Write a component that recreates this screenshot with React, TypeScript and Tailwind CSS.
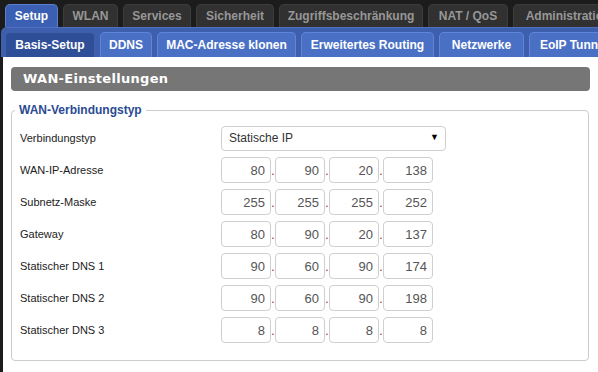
const TOP_TABS = [
  { label: "Setup", w: "w-[53px]", active: true },
  { label: "WLAN", w: "w-[55px]" },
  { label: "Services", w: "w-[68px]" },
  { label: "Sicherheit", w: "w-[78px]" },
  { label: "Zugriffsbeschränkung", w: "w-[144px]" },
  { label: "NAT / QoS", w: "w-[80px]" },
  { label: "Administration", w: "w-[110px]" },
];

const SUB_TABS = [
  { label: "Basis-Setup", w: "w-[90px]", active: true },
  { label: "DDNS", w: "w-[52px]" },
  { label: "MAC-Adresse klonen", w: "w-[139px]" },
  { label: "Erweitertes Routing", w: "w-[133px]" },
  { label: "Netzwerke", w: "w-[85px]" },
  { label: "EoIP Tunnel", w: "w-[90px]" },
];

const ROWS: { label: string; ip: string[] }[] = [
  { label: "WAN-IP-Adresse", ip: ["80", "90", "20", "138"] },
  { label: "Subnetz-Maske", ip: ["255", "255", "255", "252"] },
  { label: "Gateway", ip: ["80", "90", "20", "137"] },
  { label: "Statischer DNS 1", ip: ["90", "60", "90", "174"] },
  { label: "Statischer DNS 2", ip: ["90", "60", "90", "198"] },
  { label: "Statischer DNS 3", ip: ["8", "8", "8", "8"] },
];

function IpField({ parts }: { parts: string[] }) {
  return (
    <div className="flex items-baseline">
      {parts.map((p, i) => (
        <div key={i} className="flex items-baseline">
          {i > 0 && (
            <span className="w-[4px] text-center text-[12px] leading-none text-[#8b1a1a]">
              .
            </span>
          )}
          <input
            readOnly
            value={p}
            className="h-[26px] w-[50px] rounded-[4px] border border-[#cfcfcf] bg-white pr-[5px] text-right text-[13px] text-[#555] outline-none"
          />
        </div>
      ))}
    </div>
  );
}

export default function App() {
  return (
    <div className="flex h-[372px] w-[598px] flex-col overflow-hidden bg-[#1c1c1c] font-['Liberation_Sans',Arial,sans-serif]">
      <div className="flex h-[27px] shrink-0 items-end gap-[5px] pl-[5px]">
        {TOP_TABS.map((t) => (
          <div
            key={t.label}
            className={
              "flex h-[23px] shrink-0 items-center justify-center rounded-t-[5px] border border-b-0 text-[12px] font-bold " +
              t.w +
              (t.active
                ? " border-[#5a7fd0] bg-[#3b5fb2] text-white"
                : " border-[#3c3c3c] bg-[#313131] text-[#979797]")
            }
          >
            {t.label}
          </div>
        ))}
      </div>
      <div className="ml-[1px] flex h-[30px] shrink-0 items-end gap-[5px] rounded-tl-[6px] border-t border-[#4d70c2] bg-[#3d5fad] pl-[4px]">
        {SUB_TABS.map((t) => (
          <div
            key={t.label}
            className={
              "flex h-[25px] shrink-0 items-center justify-center rounded-t-[5px] border border-b-0 text-[12px] font-bold text-white " +
              t.w +
              (t.active
                ? " border-[#3f5fa8] bg-[#2f4e98]"
                : " border-[#6085d6] bg-[#4a70c6]")
            }
          >
            {t.label}
          </div>
        ))}
      </div>
      <div className="ml-[3px] flex-1 bg-white pl-[8px] pt-[10px]">
        <div className="flex h-[24px] w-[579px] items-center rounded-[4px] bg-[#767676] pl-[12px] font-['DejaVu_Sans',sans-serif] text-[13px] font-bold tracking-[0.3px] text-white">
          WAN-Einstellungen
        </div>
        <fieldset className="mt-[11px] w-[578px] rounded-[4px] border border-[#cccccc] pb-[17px] pl-[8px] pt-[7px]">
          <legend className="-ml-[5px] px-[4px] text-[12px] font-bold leading-[16px] text-[#2a4b92]">
            WAN-Verbindungstyp
          </legend>
          <div className="flex flex-col gap-[6px]">
            <div className="flex h-[26px] items-center">
              <div className="w-[201px] text-[11px] text-[#222]">Verbindungstyp</div>
              <div className="flex h-[25px] w-[225px] items-center justify-between rounded-[4px] border border-[#cfcfcf] pl-[7px] pr-[6px] text-[12px] text-[#333]">
                <span>Statische IP</span>
                <span className="text-[9px] text-black">▼</span>
              </div>
            </div>
            {ROWS.map((r) => (
              <div key={r.label} className="flex h-[26px] items-center">
                <div className="w-[201px] text-[11px] text-[#222]">{r.label}</div>
                <IpField parts={r.ip} />
              </div>
            ))}
          </div>
        </fieldset>
      </div>
    </div>
  );
}
